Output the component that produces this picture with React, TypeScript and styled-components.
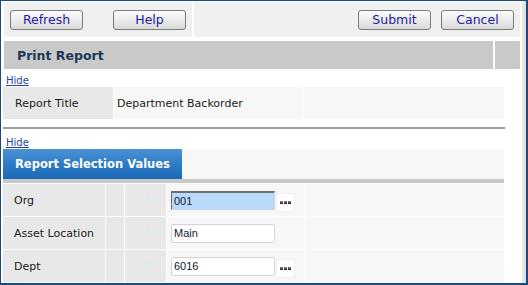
import React from "react";
import styled, { createGlobalStyle } from "styled-components";

const GlobalStyle = createGlobalStyle`
  html, body { margin: 0; padding: 0; background: #ffffff; }
  body { font-family: "DejaVu Sans", Verdana, sans-serif; }
  * { box-sizing: border-box; }
`;

const Frame = styled.div`
  width: 528px;
  height: 285px;
  display: flex;
  background: #ffffff;
  border-style: solid;
  border-color: #1a4a7e;
  border-width: 1px 2px 2px 1px;
  overflow: hidden;
`;

const Main = styled.div`
  width: 519px;
  flex: none;
  padding: 1px 0 0 2px;
  display: flex;
  flex-direction: column;
`;

const Spacer = styled.div`
  width: 2px;
  flex: none;
`;

const Gutter = styled.div`
  width: 4px;
  flex: none;
  background: linear-gradient(to right, #ececec, #dcdcdc);
`;

const Toolbar = styled.div`
  display: flex;
  gap: 2px;
  height: 35px;
  margin-left: 1px;
`;

const ToolCell = styled.div<{ $grow?: boolean; $align?: string }>`
  background: #f0f0f0;
  display: flex;
  align-items: flex-start;
  justify-content: ${(p) => p.$align || "flex-start"};
  width: ${(p) => (p.$grow ? "auto" : "188px")};
  flex: ${(p) => (p.$grow ? "1" : "none")};
  padding: 8px ${(p) => (p.$grow ? "6px" : "0")} 0 6px;
  gap: ${(p) => (p.$grow ? "10px" : "30px")};
`;

const Button = styled.button`
  width: 73px;
  height: 20px;
  padding: 0;
  border: 1px solid #7c7c7c;
  border-radius: 3px;
  background: linear-gradient(to bottom, #fbfbfb 0%, #ececec 50%, #d9d9d9 100%);
  color: #23209c;
  font-family: "DejaVu Sans", Verdana, sans-serif;
  font-size: 12.5px;
  line-height: 18px;
  cursor: pointer;
`;

const HeaderRow = styled.div`
  display: flex;
  gap: 2px;
  height: 28px;
  margin-top: 4px;
  margin-left: 1px;
`;

const HeaderCell = styled.div<{ $small?: boolean }>`
  background: #c8c9c8;
  flex: ${(p) => (p.$small ? "none" : "1")};
  width: ${(p) => (p.$small ? "25px" : "auto")};
  display: flex;
  align-items: center;
  padding-left: ${(p) => (p.$small ? "0" : "13px")};
  color: #1d3757;
  font-weight: bold;
  font-size: 12.5px;
`;

const HideBar = styled.div<{ $h: number }>`
  height: ${(p) => p.$h}px;
  display: flex;
  align-items: flex-end;
  padding: 0 0 1px 3px;
`;

const HideLink = styled.a`
  color: #1e3fa6;
  font-size: 10px;
  line-height: 11px;
  text-decoration: underline;
  cursor: pointer;
`;

const Table = styled.div<{ $cols: string }>`
  display: grid;
  grid-template-columns: ${(p) => p.$cols};
  grid-auto-rows: 32px;
  gap: 1px;
  width: 501px;
`;

const Cell = styled.div<{ $tone: "label" | "value"; $pad?: number }>`
  background: ${(p) => (p.$tone === "label" ? "#e8e8e8" : "#f7f7f7")};
  display: flex;
  align-items: center;
  padding-left: ${(p) => p.$pad ?? 0}px;
  font-size: 11px;
  color: #1a1a1a;
  white-space: nowrap;
`;

const Separator = styled.div`
  width: 502px;
  height: 2px;
  margin-top: 8px;
  background: #a0a0a0;
`;

const TabRow = styled.div`
  display: flex;
  width: 501px;
  height: 30px;
  background: #f7f7f7;
`;

const Tab = styled.div`
  width: 179px;
  background: linear-gradient(to bottom, #4b93d6 0%, #2f7cc6 50%, #1a69b6 100%);
  color: #ffffff;
  font-weight: bold;
  font-size: 11.5px;
  display: flex;
  align-items: center;
  padding-left: 12px;
`;

const TabStrip = styled.div`
  width: 501px;
  height: 4px;
  background: #c8c9c8;
  margin-bottom: 1px;
`;

const Help = styled.span`
  flex: 1;
  text-align: center;
  color: #d3eef3;
  font-weight: bold;
  font-size: 12px;
`;

const InputCell = styled(Cell)`
  gap: 1px;
`;

const TextInput = styled.div<{ $focused?: boolean }>`
  width: 104px;
  height: 19px;
  display: flex;
  align-items: center;
  padding-left: 2px;
  font-family: "Liberation Sans", Arial, sans-serif;
  font-size: 11px;
  color: #111a2e;
  background: ${(p) => (p.$focused ? "#b9dafa" : "#ffffff")};
  border: 1px solid ${(p) => (p.$focused ? "#c9d6e3" : "#d4d4d4")};
  border-top-color: ${(p) => (p.$focused ? "#6e6e6e" : "#d4d4d4")};
  border-left-color: ${(p) => (p.$focused ? "#6e6e6e" : "#d4d4d4")};
  border-top-width: ${(p) => (p.$focused ? "2px" : "1px")};
  border-radius: ${(p) => (p.$focused ? "0" : "2px")};
`;

const LookupButton = styled.div`
  width: 19px;
  height: 19px;
  margin-top: 4px;
  background: #ffffff;
  border: 1px solid #efefef;
  display: flex;
  align-items: center;
  justify-content: center;
  gap: 1px;
`;

const Dot = styled.span`
  width: 3px;
  height: 3px;
  background: linear-gradient(to bottom, #8a8a8a, #1a1a1a);
`;

const rows = [
  { label: "Org", value: "001", focused: true, lookup: true },
  { label: "Asset Location", value: "Main", focused: false, lookup: false },
  { label: "Dept", value: "6016", focused: false, lookup: true },
];

export default function App() {
  return (
    <>
      <GlobalStyle />
      <Frame>
        <Main>
          <Toolbar>
            <ToolCell>
              <Button>Refresh</Button>
              <Button>Help</Button>
            </ToolCell>
            <ToolCell $grow $align="flex-end">
              <Button>Submit</Button>
              <Button>Cancel</Button>
            </ToolCell>
          </Toolbar>
          <HeaderRow>
            <HeaderCell>Print Report</HeaderCell>
            <HeaderCell $small />
          </HeaderRow>
          <HideBar $h={18}>
            <HideLink>Hide</HideLink>
          </HideBar>
          <Table $cols="110px 189px 200px">
            <Cell $tone="label" $pad={12}>Report Title</Cell>
            <Cell $tone="value" $pad={3}>Department Backorder</Cell>
            <Cell $tone="value" />
          </Table>
          <Separator />
          <HideBar $h={20}>
            <HideLink>Hide</HideLink>
          </HideBar>
          <TabRow>
            <Tab>Report Selection Values</Tab>
          </TabRow>
          <TabStrip />
          <Table $cols="102px 18px 41px 137px 199px">
            {rows.map((r) => (
              <React.Fragment key={r.label}>
                <Cell $tone="label" $pad={11}>{r.label}</Cell>
                <Cell $tone="label" />
                <Cell $tone="label"><Help>?</Help></Cell>
                <InputCell $tone="value" $pad={4}>
                  <TextInput $focused={r.focused}>{r.value}</TextInput>
                  {r.lookup && (
                    <LookupButton>
                      <Dot />
                      <Dot />
                      <Dot />
                    </LookupButton>
                  )}
                </InputCell>
                <Cell $tone="value" />
              </React.Fragment>
            ))}
          </Table>
        </Main>
        <Spacer />
        <Gutter />
      </Frame>
    </>
  );
}
